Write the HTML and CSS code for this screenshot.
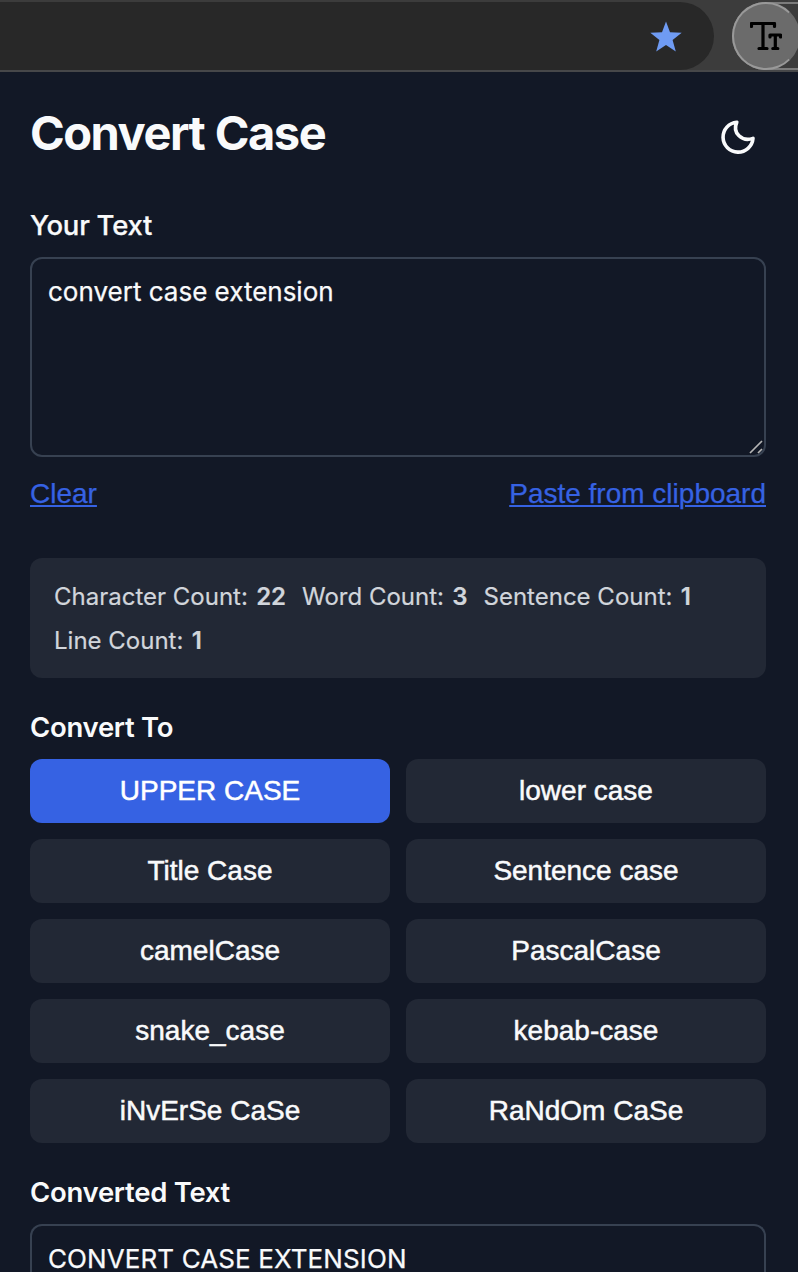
FILE: index.html
```html
<!DOCTYPE html>
<html lang="en">
<head>
<meta charset="utf-8">
<title>Convert Case</title>
<link rel="stylesheet" href="styles.css">
</head>
<body>
<div class="browser-bar">
  <div class="address-bar">
    <svg class="star" viewBox="0 0 32 32"><path d="M16 .5 20 11.300 31.700 11.700 22.600 19 25.800 30.500 16 24 6.200 30.500 9.400 19 .3 11.700 12 11.300Z"/></svg>
  </div>
  <div class="extension-group">
    <div class="extension-button">
      <svg class="type-icon" viewBox="0 0 32 28"><path d="M1.500 4.500V1.500H24.500V4.500M13 1.500V26.500M9 26.500H17"/><path d="M20 15V13H30.500V15M25.300 13V26.500M22.800 26.500H27.800"/></svg>
    </div>
  </div>
</div>
<main class="popup">
  <header class="header">
    <h1 class="title">Convert Case</h1>
    <button class="theme-toggle" aria-label="Toggle theme">
      <svg class="moon" viewBox="0 0 44 44"><path d="M20.800 8.200A15 15 0 1 0 37 24.400C26 28.300 16 19 20.800 8.200Z"/></svg>
    </button>
  </header>
  <label class="label label-source" for="source">Your Text</label>
  <div class="field">
    <textarea class="textarea" id="source">convert case extension</textarea>
    <svg class="grip" viewBox="0 0 16 16"><path d="M2 14 14 2M10 14 14 10"/></svg>
  </div>
  <div class="actions"><button class="link">Clear</button><button class="link">Paste from clipboard</button></div>
  <section class="stats">
    <span>Character Count: <b>22</b></span><span>Word Count: <b>3</b></span><span>Sentence Count: <b>1</b></span><span>Line Count: <b>1</b></span>
  </section>
  <h2 class="label">Convert To</h2>
  <div class="cases">
    <button class="case active">UPPER CASE</button><button class="case">lower case</button>
    <button class="case">Title Case</button><button class="case">Sentence case</button>
    <button class="case">camelCase</button><button class="case">PascalCase</button>
    <button class="case">snake_case</button><button class="case">kebab-case</button>
    <button class="case">iNvErSe CaSe</button><button class="case">RaNdOm CaSe</button>
  </div>
  <label class="label" for="result">Converted Text</label>
  <textarea class="textarea result" id="result">CONVERT CASE EXTENSION</textarea>
</main>
</body>
</html>
```
FILE: styles.css
```css
* { box-sizing: border-box; }
body {
  margin: 0;
  height: 1272px;
  overflow: hidden;
  background: #121826;
  color: #f9fafb;
  font-family: Inter, sans-serif;
}
button { padding: 0; border: 0; background: none; font-family: "Liberation Sans", Arial, sans-serif; }
svg { display: block; }
.browser-bar {
  display: flex;
  justify-content: space-between;
  height: 72px;
  padding-top: 2px;
  background: #3c3c3c;
  border-bottom: 2px solid #464749;
}
.address-bar {
  display: flex;
  align-items: center;
  justify-content: flex-end;
  width: 714px;
  height: 68px;
  padding-right: 32px;
  background: #282828;
  border-radius: 0 34px 34px 0;
}
.star { width: 32px; height: 32px; margin-top: 2px; fill: #6f9bf3; }
.extension-group {
  width: 66px;
  height: 68px;
  border: 2px solid #7c7c7c;
  border-right: 0;
  border-radius: 34px 0 0 34px;
}
.extension-button {
  width: 68px;
  height: 68px;
  margin: -2px;
  padding: 18px 0 0 16px;
  border: 2px solid #999;
  border-right-color: #6b6b6b;
  border-radius: 50%;
  background: #6b6b6b;
}
.type-icon { width: 32px; height: 28px; fill: none; stroke: #000; stroke-width: 3.2; stroke-linecap: round; stroke-linejoin: round; }
.popup { padding: 32px 32px 0 30px; }
.header { display: flex; justify-content: space-between; height: 106px; }
.title { margin: 0; font-size: 47px; line-height: 58px; font-weight: 700; letter-spacing: -1.5px; word-spacing: 1px; }
.theme-toggle { width: 44px; height: 44px; margin: 10px 6px 0 0; }
.moon { width: 44px; height: 44px; fill: none; stroke: #f9fafb; stroke-width: 3.6; stroke-linejoin: round; }
.label { display: block; height: 47px; margin: 0; font-size: 27.5px; line-height: 30px; font-weight: 600; letter-spacing: -0.28px; }
.label-source { font-weight: 500; letter-spacing: -0.25px; -webkit-text-stroke: 0.25px; }
.field { position: relative; height: 200px; }
.textarea {
  display: block;
  width: 736px;
  height: 200px;
  padding: 17px 16px 15px;
  border: 2px solid #374151;
  border-radius: 12px;
  background: transparent;
  color: #f9fafb;
  font: 400 26px/32px Inter, sans-serif;
  -webkit-text-stroke: 0.25px;
  resize: none;
  outline: 0;
  overflow: hidden;
}
.result { height: 48px; border-bottom: 0; padding-bottom: 0; border-radius: 12px 12px 0 0; letter-spacing: 0.1px; }
.grip { position: absolute; right: 2px; bottom: 2px; width: 16px; height: 16px; fill: none; stroke: #b5b5b5; stroke-width: 1.7; }
.actions { display: flex; justify-content: space-between; height: 101px; padding-top: 21px; align-items: flex-start; }
.link { color: #3662e3; font-size: 28px; line-height: 32px; text-decoration: underline; text-decoration-thickness: 2px; text-underline-offset: 2px; -webkit-text-stroke: 0.25px; }
.stats {
  display: flex;
  flex-wrap: wrap;
  gap: 12px 16px;
  height: 120px;
  margin-bottom: 34px;
  padding: 23px 24px 21px;
  border-radius: 12px;
  background: #222835;
  color: #d1d5db;
  font-size: 24px;
  line-height: 32px;
  align-content: flex-start;
  -webkit-text-stroke: 0.2px;
}
.stats b { margin-left: 1.500px; font-weight: 600; }
.cases { display: grid; grid-template-columns: 1fr 1fr; gap: 16px; margin-bottom: 34px; }
.case {
  height: 64px;
  border-radius: 12px;
  background: #222835;
  color: #f9fafb;
  font-size: 28px;
  -webkit-text-stroke: 0.5px;
}
.case.active { background: #3662e3; color: #fff; }
```
